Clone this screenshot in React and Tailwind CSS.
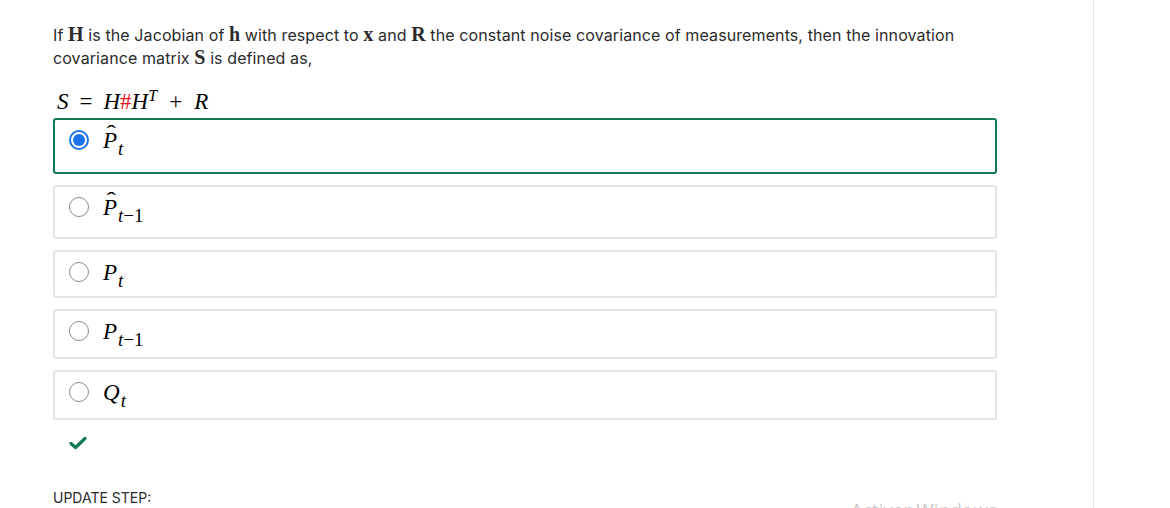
const serif = { fontFamily: '"Liberation Serif", "DejaVu Serif", serif' };

const Radio = ({ checked }) =>
  checked ? (
    <span className="flex h-[20px] w-[20px] shrink-0 items-center justify-center rounded-full border-2 border-[#1a73e8] bg-white">
      <span className="h-[12px] w-[12px] rounded-full bg-[#1a73e8]" />
    </span>
  ) : (
    <span className="h-[20px] w-[20px] shrink-0 rounded-full border border-[#8a8a8a] bg-white" />
  );

const Hat = ({ children }) => (
  <span className="relative inline-block">
    <span className="absolute -top-[8px] left-[5px] inline-block scale-x-150 text-[19px] not-italic leading-none">ˆ</span>
    {children}
  </span>
);

const Sub = ({ children }) => (
  <span className="relative top-[7px] ml-[1px] text-[19px]">{children}</span>
);

const options = [
  { h: "h-[56px]", checked: true, label: <><Hat>P</Hat><Sub>t</Sub></> },
  { h: "h-[54px]", label: <><Hat>P</Hat><Sub>t<span className="not-italic">−1</span></Sub></> },
  { h: "h-[48px]", label: <>P<Sub>t</Sub></> },
  { h: "h-[50px]", label: <>P<Sub>t<span className="not-italic">−1</span></Sub></> },
  { h: "h-[50px]", label: <>Q<Sub>t</Sub></> },
];

export default function App() {
  return (
    <div className="flex h-[508px] w-[1170px] overflow-hidden bg-white" style={{ fontFamily: 'Inter, "Noto Sans", sans-serif' }}>
      <div className="w-[1094px] shrink-0 border-r border-[#e6e6e6] pl-[53px] pt-[23px]">
        <p className="w-[920px] text-[16px] leading-[22px] tracking-[0.1px] text-[#2b2b2b]">
          If <b className="text-[20px]" style={serif}>H</b> is the Jacobian of <b className="text-[20px]" style={serif}>h</b> with respect to <b className="text-[20px]" style={serif}>x</b> and <b className="text-[20px]" style={serif}>R</b> the constant noise covariance of measurements, then the innovation covariance matrix <b className="text-[20px]" style={serif}>S</b> is defined as,
        </p>

        <div className="mt-[20px] pl-[4px] text-[23px] italic leading-[26px] text-black" style={serif}>
          S<span className="not-italic mx-[11px]">=</span>H<span className="not-italic text-[#e8141b]">#</span>H<sup className="text-[16px]">T</sup><span className="not-italic mx-[12px]">+</span>R
        </div>

        <div className="mt-[3px] flex w-[944px] flex-col gap-[11px]">
          {options.map((o, i) => (
            <div
              key={i}
              className={`flex ${o.h} items-start gap-[14px] rounded-[3px] pl-[14px] pt-[10px] ${o.checked ? "border-2 border-[#0e7a4e]" : "border-2 border-[#e4e4e4]"}`}
            >
              <Radio checked={o.checked} />
              <span className="text-[23px] italic leading-[22px] text-black" style={serif}>{o.label}</span>
            </div>
          ))}
        </div>

        <svg className="mt-[16px] ml-[16px]" width="18" height="14" viewBox="0 0 18 14">
          <path d="M2 7.5 L6.5 11.5 L16 2.5" fill="none" stroke="#0e7a4e" strokeWidth="3.2" strokeLinecap="round" strokeLinejoin="round" />
        </svg>

        <div className="mt-[29px] flex items-end justify-between pr-[96px]">
          <span className="text-[14px] text-[#2b2b2b]">UPDATE STEP:</span>
          <span className="translate-y-[17px] text-[19px] text-[#c9c9c9]" style={{ fontFamily: '"Open Sans", sans-serif' }}>Activer Windows</span>
        </div>
      </div>
    </div>
  );
}
